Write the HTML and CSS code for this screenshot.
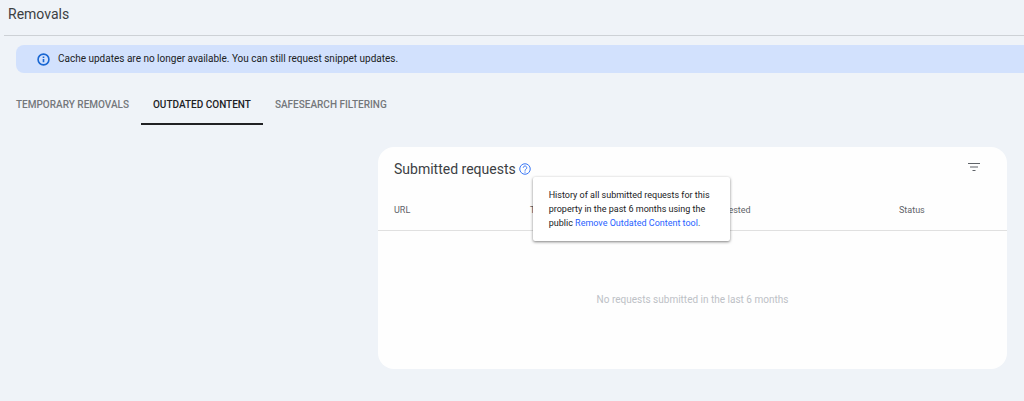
FILE: index.html
```html
<!DOCTYPE html>
<html lang="en">
<head>
<meta charset="utf-8">
<meta name="viewport" content="width=device-width, initial-scale=1">
<title>Removals</title>
<link rel="stylesheet" href="styles.css">
</head>
<body>
<header class="page-header">
  <h1 class="page-title">Removals</h1>
</header>
<main>
  <div class="notice" role="status">
    <svg class="notice-icon" viewBox="0 0 24 24" aria-hidden="true"><circle cx="12" cy="12" r="10"/><path d="M12 11v6M12 6.500v2.500"/></svg>
    <p class="notice-text">Cache updates are no longer available. You can still request snippet updates.</p>
  </div>
  <nav class="tabs" role="tablist" aria-label="Removal types">
    <button class="tab" type="button" role="tab" aria-selected="false">TEMPORARY REMOVALS</button>
    <button class="tab tab-active" type="button" role="tab" aria-selected="true">OUTDATED CONTENT</button>
    <button class="tab" type="button" role="tab" aria-selected="false">SAFESEARCH FILTERING</button>
  </nav>
  <section class="card" aria-labelledby="requests-title">
    <div class="card-header">
      <h2 class="card-title" id="requests-title">Submitted requests</h2>
      <div class="help">
        <button class="icon-button" type="button" aria-label="About submitted requests" aria-describedby="help-text">
          <svg class="help-icon" viewBox="0 0 24 24" aria-hidden="true"><circle cx="12" cy="12" r="10.5"/><path d="M8.5 9.500a3.500 3.500 0 1 1 5.700 2.700C12.800 13.300 12 13.800 12 15.500M12 17v2.500"/></svg>
        </button>
        <div class="tooltip" id="help-text" role="tooltip">History of all submitted requests for this property in the past 6 months using the public <a class="tooltip-link" href="#">Remove Outdated Content tool</a>.</div>
      </div>
      <button class="icon-button filter-button" type="button" aria-label="Filter">
        <svg class="filter-icon" viewBox="0 0 12 8" aria-hidden="true"><path d="M0 .5h12M2 4h8M4.500 7.500h3"/></svg>
      </button>
    </div>
    <table class="requests">
      <thead>
        <tr><th class="col-url" scope="col">URL</th><th class="col-type" scope="col">Type</th><th class="col-date" scope="col">Requested</th><th class="col-status" scope="col">Status</th></tr>
      </thead>
      <tbody>
        <tr><td class="empty" colspan="4">No requests submitted in the last 6 months</td></tr>
      </tbody>
    </table>
  </section>
</main>
</body>
</html>
```
FILE: styles.css
```css
* {
  box-sizing: border-box;
}

body {
  margin: 0;
  background: #eff3f8;
  color: #3c4043;
  font-family: Roboto, "Liberation Sans", sans-serif;
  font-size: 10px;
}

button {
  padding: 0;
  border: 0;
  background: none;
  font: inherit;
}

.page-header {
  margin-left: 4px;
  padding: 6px 4px 13px;
  border-bottom: 1px solid #cdd1d6;
}

.page-title {
  margin: 0;
  font-size: 14px;
  font-weight: 400;
  line-height: 16px;
}

.notice {
  display: flex;
  align-items: center;
  gap: 8px;
  margin: 9px 0 0 16px;
  padding: 6px 21px;
  border-radius: 8px 0 0 8px;
  background: #d2e1fd;
  color: #202124;
}

.notice-icon {
  width: 13px;
  height: 13px;
  fill: none;
  stroke: #1967d2;
  stroke-width: 3;
}

.notice-text {
  margin: 0;
  line-height: 16px;
}

.tabs {
  display: flex;
  margin: 12px 0 0 4px;
}

.tab {
  padding: 13px 12px 11px;
  border-bottom: 2px solid transparent;
  color: #74777b;
  font-weight: 500;
  line-height: 14px;
}

.tab-active {
  border-color: #202124;
  color: #202124;
}

.card {
  margin: 22px 17px 33px 378px;
  border-radius: 16px;
  background: #fefefe;
}

.card-header {
  display: flex;
  align-items: center;
  gap: 3px;
  padding: 12px 27px 12px 16px;
}

.card-title {
  margin: 0;
  font-size: 14px;
  font-weight: 400;
  line-height: 20px;
}

.help {
  position: relative;
}

.icon-button {
  display: block;
}

.help-icon {
  display: block;
  width: 12px;
  height: 12px;
  fill: none;
  stroke: #3b78f5;
  stroke-width: 2;
}

.filter-button {
  align-self: flex-start;
  margin: 4px 0 0 auto;
}

.filter-icon {
  display: block;
  width: 12px;
  height: 8px;
  fill: none;
  stroke: #5f6368;
}

.tooltip {
  position: absolute;
  top: 14px;
  left: 14px;
  width: 197px;
  padding: 11px 16px;
  border-radius: 2px;
  background: #fff;
  box-shadow: 0 1px 3px rgba(0, 0, 0, 0.5);
  color: #202124;
  font-size: 9px;
  line-height: 14px;
}

.tooltip-link {
  color: #2962ff;
  text-decoration: none;
}

.requests {
  width: 100%;
  border-collapse: collapse;
  table-layout: fixed;
}

.requests th {
  padding: 12px 0 13px 16px;
  border-bottom: 1px solid #e0e0e0;
  color: #5f6368;
  font-size: 9px;
  font-weight: 400;
  line-height: 14px;
  text-align: left;
}

.col-url {
  width: 136px;
}

.col-type {
  width: 178px;
}

.col-date {
  width: 191px;
}

.requests .empty {
  padding: 61px 0;
  color: #bdc1c6;
  line-height: 16px;
  text-align: center;
}
```
